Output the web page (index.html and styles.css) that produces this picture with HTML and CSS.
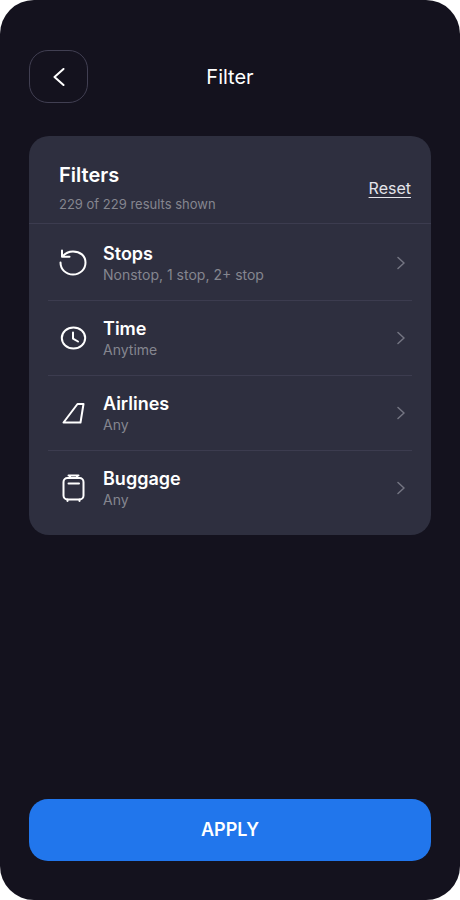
FILE: index.html
```html
<!DOCTYPE html>
<html lang="en">
<head>
<meta charset="utf-8">
<meta name="viewport" content="width=device-width, initial-scale=1">
<title>Filter</title>
<link rel="stylesheet" href="styles.css">
</head>
<body>
<div class="screen">
  <header class="topbar">
    <button class="back" type="button" aria-label="Back">
      <svg width="12" height="18" viewBox="0 0 12 18"><path d="M10.500 1L1.500 9l9 8"/></svg>
    </button>
    <h1 class="title">Filter</h1>
  </header>
  <main class="card">
    <div class="card-head">
      <div>
        <h2 class="heading">Filters</h2>
        <p class="summary">229 of 229 results shown</p>
      </div>
      <a class="reset" href="#">Reset</a>
    </div>
    <ul class="list">
      <li class="item">
        <button class="row" type="button">
          <svg class="icon" width="28" height="28" viewBox="0 0 28 28"><path d="M1.500 13.500C1.500 20.500 7 25.500 14 25.500s12.500-5 12.500-12S21 2.500 14 2.500C9.500 2.500 6 4.500 3.500 7.500M3 1.500v6.200h7.500"/></svg>
          <span class="text"><span class="name">Stops</span><span class="note">Nonstop, 1 stop, 2+ stop</span></span>
          <svg class="chevron" width="8" height="14" viewBox="0 0 8 14"><path d="M1 1.500L7 7l-6 5.500"/></svg>
        </button>
      </li>
      <li class="item">
        <button class="row" type="button">
          <svg class="icon" width="28" height="28" viewBox="0 0 28 28"><ellipse cx="14.500" cy="14" rx="11.700" ry="10.500"/><path d="M14 8.500v6.200l5 2.800"/></svg>
          <span class="text"><span class="name">Time</span><span class="note">Anytime</span></span>
          <svg class="chevron" width="8" height="14" viewBox="0 0 8 14"><path d="M1 1.500L7 7l-6 5.500"/></svg>
        </button>
      </li>
      <li class="item">
        <button class="row" type="button">
          <svg class="icon" width="28" height="28" viewBox="0 0 28 28"><path d="M18.500 5h6l-3 18.500H4.500z"/></svg>
          <span class="text"><span class="name">Airlines</span><span class="note">Any</span></span>
          <svg class="chevron" width="8" height="14" viewBox="0 0 8 14"><path d="M1 1.500L7 7l-6 5.500"/></svg>
        </button>
      </li>
      <li class="item">
        <button class="row" type="button">
          <svg class="icon" width="28" height="28" viewBox="0 0 28 28"><rect x="4.500" y="4" width="20" height="21.500" rx="4"/><path d="M9.500 1.500h10M11 1.500V4M18 1.500V4M9.500 9.500H20M8.500 25.500V27M20.500 25.500V27"/></svg>
          <span class="text"><span class="name">Buggage</span><span class="note">Any</span></span>
          <svg class="chevron" width="8" height="14" viewBox="0 0 8 14"><path d="M1 1.500L7 7l-6 5.500"/></svg>
        </button>
      </li>
    </ul>
  </main>
  <button class="apply" type="button">APPLY</button>
</div>
</body>
</html>
```
FILE: styles.css
```css
* { box-sizing: border-box; }

body {
  margin: 0;
  background: #fff;
  color: #fff;
  font-family: Inter, "Liberation Sans", sans-serif;
}

h1, h2, p, ul { margin: 0; padding: 0; }

button {
  border: 0;
  padding: 0;
  background: none;
  color: inherit;
  font-family: inherit;
  cursor: pointer;
}

svg {
  fill: none;
  stroke: #fff;
  stroke-linecap: round;
  stroke-linejoin: round;
  flex: none;
}

.screen {
  display: flex;
  flex-direction: column;
  min-height: 100vh;
  padding: 50px 29px 39px;
  border-radius: 34px;
  background: #14121e;
}

.topbar {
  display: grid;
  grid-template-columns: 59px 1fr 59px;
  align-items: center;
  margin-bottom: 33px;
}

.back {
  display: flex;
  align-items: center;
  justify-content: center;
  height: 53px;
  border: 1px solid #413f52;
  border-radius: 19px;
}

.back svg { stroke-width: 2; }

.title {
  font-size: 20px;
  font-weight: 400;
  line-height: 24px;
  text-align: center;
}

.card {
  padding-bottom: 10px;
  border-radius: 20px;
  background: #2e2f3f;
}

.card-head {
  display: flex;
  align-items: center;
  justify-content: space-between;
  padding: 26px 20px 10px 30px;
  border-bottom: 1px solid #3c3c4f;
}

.heading {
  font-size: 20px;
  font-weight: 600;
  line-height: 26px;
}

.name {
  font-size: 18px;
  font-weight: 600;
  line-height: 24px;
}

.note,
.summary {
  color: #85868f;
  font-size: 14px;
  line-height: 18px;
}

.summary {
  margin-top: 7px;
  font-size: 13px;
}

.reset {
  color: #e4e4ea;
  font-size: 16px;
  line-height: 24px;
  text-decoration: underline;
  text-decoration-thickness: 1px;
  text-underline-offset: 3px;
}

.list {
  padding: 2px 19px 0;
  list-style: none;
}

.item + .item { border-top: 1px solid #3c3c4f; }

.row {
  display: flex;
  align-items: center;
  width: 100%;
  padding: 16px 7px 16px 11px;
  text-align: left;
}

.icon { stroke-width: 2; }

.text {
  display: flex;
  flex: 1;
  flex-direction: column;
  margin-left: 16px;
}

.chevron {
  stroke: #747582;
  stroke-width: 1.500;
}

.apply {
  height: 62px;
  margin-top: auto;
  border-radius: 19px;
  background: #2176ec;
  font-size: 18px;
  font-weight: 600;
  line-height: 24px;
}
```
